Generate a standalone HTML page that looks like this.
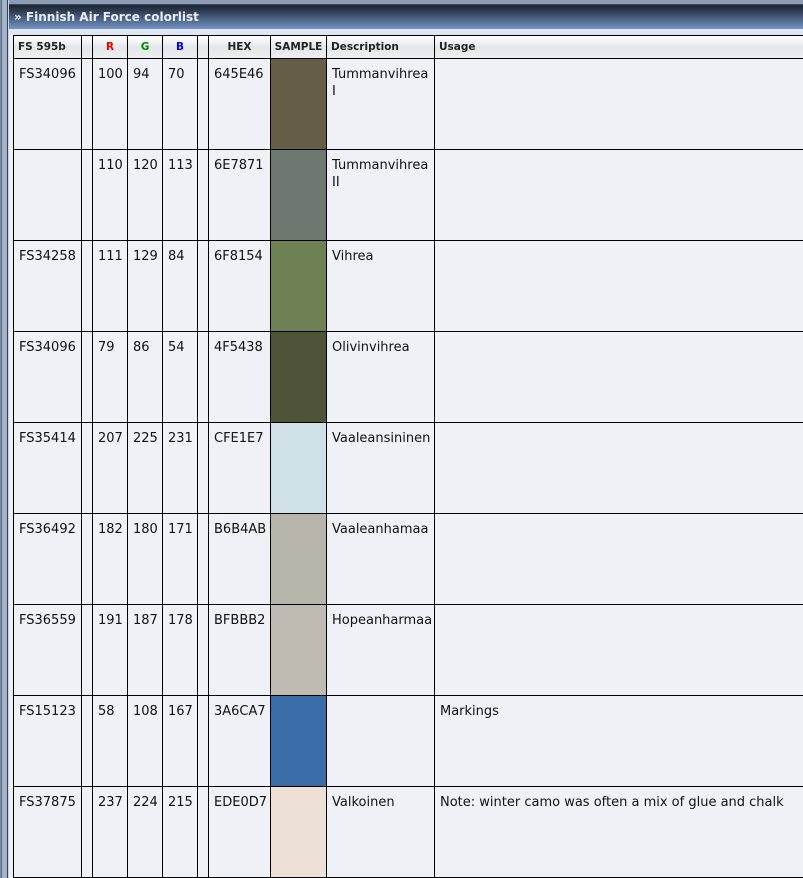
<!DOCTYPE html>
<html><head><style>
body{margin:0;width:803px;height:878px;overflow:hidden;background:#eef0f5;position:relative;font-family:"DejaVu Sans","Liberation Sans",sans-serif;}
.lf{position:absolute;left:0;top:0;width:9px;height:878px;background:linear-gradient(90deg,#7d8ca3 0,#7d8ca3 1px,#5a6a82 1px,#5a6a82 2px,#a3b3cc 2px,#a3b3cc 7px,#34435a 7px,#34435a 8px,#c9d3e3 8px);}
.top{position:absolute;left:0;top:0;width:803px;height:4px;background:#8d9cb3;}
.tb{position:absolute;left:9px;top:4px;width:794px;height:25px;background:linear-gradient(#1c2535 0,#2f3c52 25%,#4f6587 60%,#7394c6 100%);border-top:1px solid #3c4a60;box-sizing:border-box;color:#e8eef8;font-weight:bold;font-size:12px;line-height:24px;padding-left:5px;}
.ub{position:absolute;left:9px;top:29px;width:794px;height:6px;background:#dfe6f2;}
table{position:absolute;left:13px;top:35px;border-collapse:collapse;table-layout:fixed;width:810px;background:#eff1f6;}
td,th{border:1px solid #000;padding:0;vertical-align:top;font-size:13px;color:#111;}
th{height:23px;font-size:10.5px;font-weight:bold;background:linear-gradient(#fff,#e4e6ea 50%,#eeeff2);color:#222;vertical-align:middle;box-sizing:border-box;}
td{height:91px;padding:7px 0 0 5px;line-height:17px;box-sizing:border-box;}
td.s{padding:0;}
</style></head><body>
<div class="top"></div>
<div class="lf"></div>
<div class="tb">» Finnish Air Force colorlist</div>
<div class="ub"></div>
<table>
<colgroup><col style="width:68px"><col style="width:11px"><col style="width:35px"><col style="width:35px"><col style="width:35px"><col style="width:11px"><col style="width:62px"><col style="width:56px"><col style="width:108px"><col></colgroup>
<tr><th style="text-align:left;padding-left:4px">FS 595b</th><th></th><th style="color:#e00">R</th><th style="color:#080">G</th><th style="color:#00e">B</th><th></th><th>HEX</th><th>SAMPLE</th><th style="text-align:left;padding-left:4px">Description</th><th style="text-align:left;padding-left:4px">Usage</th></tr>
<tr><td>FS34096</td><td></td><td>100</td><td>94</td><td>70</td><td></td><td>645E46</td><td class="s" style="background:#645E46"></td><td>Tummanvihrea<br>I</td><td></td></tr>
<tr><td></td><td></td><td>110</td><td>120</td><td>113</td><td></td><td>6E7871</td><td class="s" style="background:#6E7871"></td><td>Tummanvihrea<br>II</td><td></td></tr>
<tr><td>FS34258</td><td></td><td>111</td><td>129</td><td>84</td><td></td><td>6F8154</td><td class="s" style="background:#6F8154"></td><td>Vihrea</td><td></td></tr>
<tr><td>FS34096</td><td></td><td>79</td><td>86</td><td>54</td><td></td><td>4F5438</td><td class="s" style="background:#4F5438"></td><td>Olivinvihrea</td><td></td></tr>
<tr><td>FS35414</td><td></td><td>207</td><td>225</td><td>231</td><td></td><td>CFE1E7</td><td class="s" style="background:#CFE1E7"></td><td style="white-space:nowrap">Vaaleansininen</td><td></td></tr>
<tr><td>FS36492</td><td></td><td>182</td><td>180</td><td>171</td><td></td><td>B6B4AB</td><td class="s" style="background:#B6B4AB"></td><td>Vaaleanhamaa</td><td></td></tr>
<tr><td>FS36559</td><td></td><td>191</td><td>187</td><td>178</td><td></td><td>BFBBB2</td><td class="s" style="background:#BFBBB2"></td><td>Hopeanharmaa</td><td></td></tr>
<tr><td>FS15123</td><td></td><td>58</td><td>108</td><td>167</td><td></td><td>3A6CA7</td><td class="s" style="background:#3A6CA7"></td><td></td><td>Markings</td></tr>
<tr><td>FS37875</td><td></td><td>237</td><td>224</td><td>215</td><td></td><td>EDE0D7</td><td class="s" style="background:#EDE0D7"></td><td>Valkoinen</td><td style="white-space:nowrap">Note: winter camo was often a mix of glue and chalk</td></tr>
</table>
</body></html>
